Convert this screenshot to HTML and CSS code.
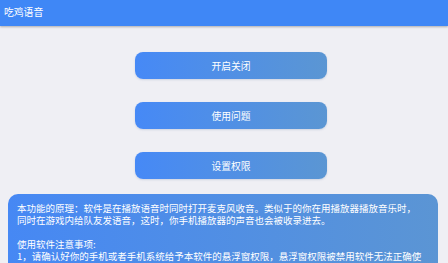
FILE: index.html
```html
<!DOCTYPE html>
<html lang="zh-CN">
<head>
<meta charset="utf-8">
<title>吃鸡语音</title>
<link rel="stylesheet" href="styles.css">
</head>
<body>
<header class="app-bar">
  <span class="app-title">吃鸡语音</span>
</header>
<main class="content">
  <div class="actions">
    <button class="action-btn" type="button">开启关闭</button>
    <button class="action-btn" type="button">使用问题</button>
    <button class="action-btn" type="button">设置权限</button>
  </div>
  <section class="info-card">
    <p class="info-line">本功能的原理：软件是在播放语音时同时打开麦克风收音。类似于的你在用播放器播放音乐时，</p>
    <p class="info-line">同时在游戏内给队友发语音，这时，你手机播放器的声音也会被收录进去。</p>
    <p class="info-line blank">&nbsp;</p>
    <p class="info-line">使用软件注意事项:</p>
    <p class="info-line">1，请确认好你的手机或者手机系统给予本软件的悬浮窗权限，悬浮窗权限被禁用软件无法正确使</p>
  </section>
</main>
</body>
</html>
```
FILE: styles.css
```css
html, body {
  margin: 0;
  padding: 0;
  height: 100%;
  overflow: hidden;
}
body {
  background: #efeff4;
  font-family: "Noto Sans CJK SC", "Noto Sans", sans-serif;
  color: #ffffff;
}
.app-bar {
  height: 26px;
  background: #3f87f6;
  box-shadow: 0 1px 2px rgba(0, 0, 0, 0.28);
  display: flex;
  align-items: center;
  padding-left: 4px;
  position: relative;
  z-index: 1;
}
.app-title {
  font-size: 9.8px;
  line-height: 12px;
  color: #ffffff;
  margin-top: -3px;
}
.content {
  padding-top: 26px;
}
.actions {
  display: flex;
  flex-direction: column;
  gap: 23px;
  padding-left: 135px;
}
.action-btn {
  width: 192px;
  height: 27px;
  border: none;
  border-radius: 8px;
  background: linear-gradient(90deg, #4689f6 0%, #5b96d3 100%);
  box-shadow: 0 1px 2px rgba(60, 90, 140, 0.18);
  color: #ffffff;
  font-family: "Noto Sans CJK SC", "Noto Sans", sans-serif;
  font-size: 9.8px;
  padding: 0;
  margin: 0;
}
.info-card {
  margin: 15px 10px 0 8px;
  padding: 8px 4px 20px 9px;
  border-radius: 10px;
  background: linear-gradient(90deg, #4688f4 0%, #5b95d4 100%);
}
.info-line {
  margin: 0;
  font-size: 9.5px;
  line-height: 12px;
  white-space: nowrap;
}
```
